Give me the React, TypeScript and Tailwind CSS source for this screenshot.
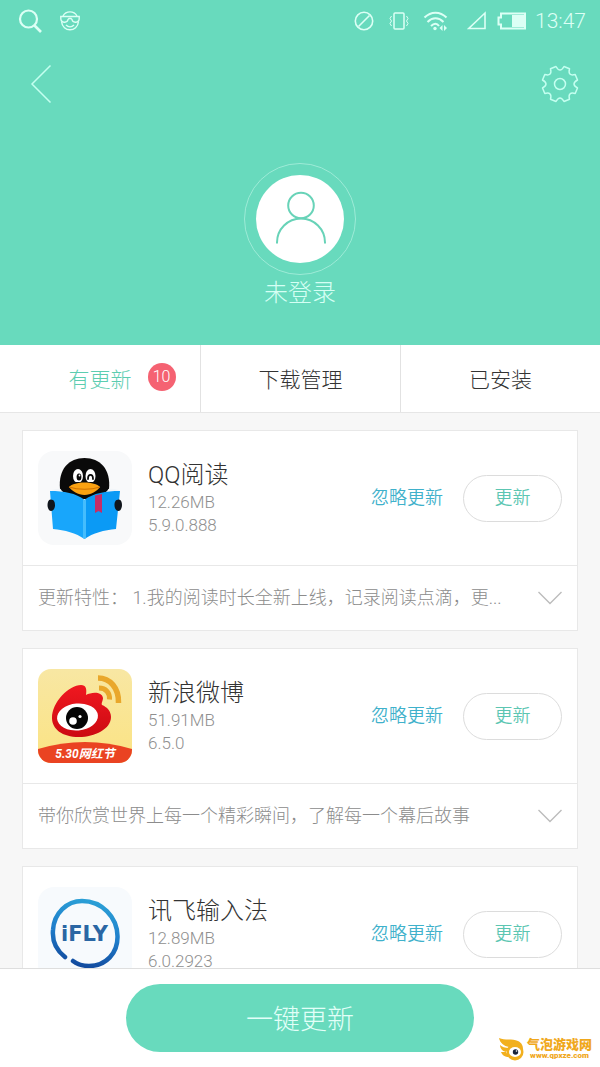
import type { ReactNode } from 'react';

type AppItem = {
  id: string;
  name: string;
  size: string;
  version: string;
  notes?: string;
  icon: ReactNode;
};

function ReaderIcon() {
  return (
    <svg viewBox="0 0 94 94" className="size-full" aria-hidden="true">
      <rect width="94" height="94" rx="16" fill="#f8f9fa" />
      <path d="M22 38C20 18 31 7 46.500 7S73 18 71 38c-5 7-16 11-24.500 11S27 45 22 38z" fill="#0a0a0a" />
      <ellipse cx="40" cy="25" rx="5" ry="7" fill="#fff" />
      <ellipse cx="52.500" cy="25" rx="5" ry="7" fill="#fff" />
      <ellipse cx="41" cy="26" rx="2.400" ry="3.600" fill="#0a0a0a" />
      <circle cx="41.500" cy="24.500" r="0.900" fill="#fff" />
      <path d="M50 28c0-5.500 5-5.500 5 0" fill="none" stroke="#0a0a0a" strokeWidth="1.800" strokeLinecap="round" />
      <path d="M14 39c11-3 25 0 32.500 8.500C54 39 69 36 81 39l-3 10H16z" fill="#f1f5f8" />
      <path d="M22 37c3 6 12 11 24.500 11S68 43 71 37l-3-6H25z" fill="#0a0a0a" />
      <path d="M31 36c5-6 26-6 31 0-3 4-9 8-15.500 8S34 40 31 36z" fill="#fba211" />
      <path d="M31 36c9 3 22 3 31 0" fill="none" stroke="#cf7203" strokeWidth="1.200" />
      <path d="M12 40c14 0 26 2 34.500 9v39C38 82 27 79 15 78z" fill="#18a6fb" />
      <path d="M82 40c-14 0-27 2-35.500 9v39C55 82 66 79 78 78z" fill="#0b9af5" />
      <path d="M45 48.200l1.500 1.300 1.500-1.300v38.800l-1.500 1-1.500-1z" fill="#45bdfd" />
      <path d="M57 44.500l7-1.500v19l-3.500-2-3.500 2z" fill="#c52d67" />
      <path d="M12.500 48.500c4 0 4.500 3 4.500 6s-2 5.500-4 5.500-3.500-3-3.500-6 1-5.500 3-5.500zM81 48.500c-4 0-4.500 3-4.500 6s2 5.500 4 5.500 3.500-3 3.500-6-1-5.500-3-5.500z" fill="#10151b" />
    </svg>
  );
}

function WeiboIcon() {
  return (
    <svg viewBox="0 0 94 94" className="size-full" aria-hidden="true">
      <defs>
        <clipPath id="weibo-clip">
          <rect width="94" height="94" rx="13" />
        </clipPath>
        <linearGradient id="weibo-bg" x1="0" y1="0" x2="0" y2="1">
          <stop offset="0" stopColor="#f8e7a3" />
          <stop offset="1" stopColor="#fbe383" />
        </linearGradient>
        <linearGradient id="weibo-red" x1="0" y1="0" x2="0" y2="1">
          <stop offset="0" stopColor="#f01820" />
          <stop offset="1" stopColor="#cc0a12" />
        </linearGradient>
      </defs>
      <g clipPath="url(#weibo-clip)">
        <rect width="94" height="94" fill="url(#weibo-bg)" />
        <path d="M60 9c12 0 21 10 20.500 25" fill="none" stroke="#e9a72b" strokeWidth="5.500" />
        <path d="M61 19c7 0 11 5 10.500 11.500" fill="none" stroke="#e9a72b" strokeWidth="5" />
        <path
          d="M14 49c0-16 17-33 29-33 5 0 6 4 5 10 5-3 16-4 17 3 0 3-2 5-1 7 5 2 9 6 9 12 0 12-16 20-32 20C24 68 14 60 14 49z"
          fill="url(#weibo-red)"
        />
        <ellipse cx="39.500" cy="48" rx="20.500" ry="13.500" fill="#fff" transform="rotate(-5 39.500 48)" />
        <circle cx="39" cy="49" r="11" fill="#050505" />
        <circle cx="35" cy="52" r="3.800" fill="#fff" />
        <circle cx="42" cy="47.500" r="1.600" fill="#fff" />
        <path d="M0 80q47-14 94 0v14H0z" fill="#ea4322" />
        <text
          x="47"
          y="89"
          textAnchor="middle"
          fill="#fff"
          fontSize="12"
          fontStyle="italic"
          fontWeight="700"
          fontFamily="Roboto, 'Noto Sans CJK SC', sans-serif"
        >
          5.30网红节
        </text>
      </g>
    </svg>
  );
}

function IflyIcon() {
  return (
    <svg viewBox="0 0 94 94" className="size-full" aria-hidden="true">
      <defs>
        <linearGradient id="ifly-ring" x1="0.6" y1="0" x2="0.4" y2="1">
          <stop offset="0" stopColor="#2b9fd6" />
          <stop offset="0.5" stopColor="#1f7ecb" />
          <stop offset="1" stopColor="#124a9e" />
        </linearGradient>
      </defs>
      <rect width="94" height="94" rx="16" fill="#f7fafd" />
      <path
        d="M27 70C18 63 14 54 15 43 16 26 29 14 44 14c20 0 35 16 35.500 35C80 66 68 79 51 79c-6 0-12-2-16-5"
        fill="none"
        stroke="url(#ifly-ring)"
        strokeWidth="4.500"
        strokeLinecap="round"
      />
      <text
        x="46.500"
        y="54"
        textAnchor="middle"
        fill="#2a66a4"
        fontSize="21"
        fontWeight="700"
        fontFamily="'DejaVu Sans', sans-serif"
      >
        iFLY
      </text>
    </svg>
  );
}

const APPS: AppItem[] = [
  {
    id: 'qq-reader',
    name: 'QQ阅读',
    size: '12.26MB',
    version: '5.9.0.888',
    notes: '更新特性： 1.我的阅读时长全新上线，记录阅读点滴，更...',
    icon: <ReaderIcon />,
  },
  {
    id: 'weibo',
    name: '新浪微博',
    size: '51.91MB',
    version: '6.5.0',
    notes: '带你欣赏世界上每一个精彩瞬间，了解每一个幕后故事',
    icon: <WeiboIcon />,
  },
  {
    id: 'ifly',
    name: '讯飞输入法',
    size: '12.89MB',
    version: '6.0.2923',
    icon: <IflyIcon />,
  },
];

const TABS = [
  { id: 'updates', label: '有更新', count: 10 },
  { id: 'downloads', label: '下载管理' },
  { id: 'installed', label: '已安装' },
];

function StatusBar() {
  return (
    <div className="flex h-[42px] items-center justify-between pr-3.5 pl-[18px] text-[#dcfff5]">
      <div className="flex items-center gap-4">
        <svg viewBox="0 0 26 26" className="size-[26px]" fill="none" stroke="currentColor" strokeWidth="2.200">
          <circle cx="10.500" cy="11" r="8.500" />
          <path d="M16.500 17.500l6.500 6.500" strokeWidth="2.600" />
        </svg>
        <svg viewBox="0 0 20 20" className="size-5" fill="none" stroke="currentColor" strokeWidth="1.400">
          <path d="M3 5C6-.5 14-.5 17 5M1.500 10.500c1 11 16 11 17 0M6 14c2.500 2.500 5.500 2.500 8 0" />
          <path d="M.8 5.500h18.400v2c0 4.500-6.500 5-7.200 1L11 7.500H9l-1 1C7.300 12.500.8 12 .8 7.500z" />
        </svg>
      </div>
      <div className="flex items-center">
        <svg viewBox="0 0 20 20" className="size-5" fill="none" stroke="currentColor" strokeWidth="1.600">
          <circle cx="10" cy="10" r="8.700" />
          <path d="M4.500 15.500l11-11" />
        </svg>
        <svg viewBox="0 0 20 20" className="ml-[15px] size-5" fill="none" stroke="currentColor" strokeWidth="1.500">
          <rect x="5" y="2" width="10" height="16" rx="1" />
          <path d="M2.500 5L1 7.500 2.500 10 1 12.500 2.500 15M17.500 5L19 7.500 17.500 10l1.500 2.500-1.500 2.500" strokeWidth="1" />
        </svg>
        <svg viewBox="0 0 26 20" className="ml-3.5 h-5 w-[26px]" fill="none" stroke="currentColor" strokeWidth="2">
          <path d="M1.500 6.500c6.500-6.500 15.500-6.500 22 0M4.500 11c5-5 11-5 16 0M8 15c3-3 6-3 8 0" />
          <circle cx="12" cy="17.500" r="1.700" fill="currentColor" stroke="none" />
          <path d="M19.500 14v6L16.500 17zM21 14v6l3-3z" fill="currentColor" stroke="none" />
        </svg>
        <svg viewBox="0 0 20 20" className="ml-[18px] size-5" fill="none" stroke="currentColor" strokeWidth="1.600">
          <path d="M18 2v15.500H1.800z" />
        </svg>
        <svg viewBox="0 0 30 20" className="ml-2.5 h-5 w-[30px]" fill="none" stroke="currentColor" strokeWidth="2">
          <path d="M4 2.500h24v15H4v-4H1.500v-7H4z" />
          <path d="M15 4h12v12H15z" fill="currentColor" stroke="none" />
        </svg>
        <span className="ml-2 text-[21px] leading-6 font-light">13:47</span>
      </div>
    </div>
  );
}

function ProfileHeader() {
  return (
    <header className="bg-[#68dabd] pb-[34px]">
      <StatusBar />
      <div className="flex h-[83px] items-center justify-between pr-5 pl-[23px] text-[#c4fff0]">
        <button type="button" aria-label="返回" className="flex h-12 w-9 items-center justify-center">
          <svg viewBox="0 0 24 40" className="h-10 w-6" fill="none" stroke="currentColor" strokeWidth="1.500">
            <path d="M21.500 1.500L3 20l18.500 18.500" />
          </svg>
        </button>
        <button type="button" aria-label="设置" className="flex size-10 items-center justify-center">
          <svg
            viewBox="-20 -20 40 40"
            className="size-10"
            fill="none"
            stroke="currentColor"
            strokeWidth="1.500"
            strokeLinejoin="round"
          >
            <circle r="5.500" />
            <path d="M-4-17.500Q0-10.500 4-17.500L9.500-15.200Q7.500-7.500 15.200-9.500L17.500-4Q10.500 0 17.500 4L15.200 9.500Q7.500 7.500 9.500 15.200L4 17.500Q0 10.500-4 17.500L-9.500 15.200Q-7.500 7.500-15.200 9.500L-17.500 4Q-10.500 0-17.500-4L-15.200-9.500Q-7.500-7.500-9.500-15.200Z" />
          </svg>
        </button>
      </div>
      <button type="button" className="mx-auto mt-[38px] flex flex-col items-center">
        <span className="flex size-28 items-center justify-center rounded-full border border-[#9debd7]">
          <span className="flex size-[88px] items-center justify-center rounded-full bg-white">
            <svg viewBox="0 0 56 56" className="size-14" fill="none" stroke="#68d3b8" strokeWidth="2">
              <circle cx="29" cy="14.500" r="12.800" />
              <path d="M5 52.500v-1a24 24 0 0 1 48 0v1" />
            </svg>
          </span>
        </span>
        <span className="text-2xl leading-9 font-light text-[#d5fff4]">未登录</span>
      </button>
    </header>
  );
}

function TabBar() {
  return (
    <nav className="grid grid-cols-3 border-b border-[#e6e6e6] bg-white">
      {TABS.map((tab) => (
        <button
          key={tab.id}
          type="button"
          className={
            tab.count
              ? 'flex h-[67px] items-center justify-center pt-1 text-[21px] font-light text-[#5ccdb0]'
              : 'flex h-[67px] items-center justify-center border-l border-[#e2e2e2] pt-1 text-[21px] font-light text-[#333]'
          }
        >
          <span className="relative">
            {tab.label}
            {tab.count ? (
              <span className="absolute -top-0.5 left-full ml-4 flex size-7 items-center justify-center rounded-full bg-[#f56272] text-base text-white">
                {tab.count}
              </span>
            ) : null}
          </span>
        </button>
      ))}
    </nav>
  );
}

function AppCard({ app }: { app: AppItem }) {
  return (
    <li className="shrink-0 border border-[#e8e8e8] bg-white">
      <div className="flex items-center px-[15px] py-5">
        <div className="size-[94px] shrink-0">{app.icon}</div>
        <div className="ml-4 min-w-0 flex-1 font-light">
          <h2 className="text-2xl leading-8 text-[#333]">{app.name}</h2>
          <p className="text-[17px] leading-[23px] text-[#8f8f8f]">{app.size}</p>
          <p className="text-[17px] leading-[23px] text-[#8f8f8f]">{app.version}</p>
        </div>
        <button type="button" className="text-lg font-[350] text-[#3fb1cb]">
          忽略更新
        </button>
        <button
          type="button"
          className="ml-5 flex h-[47px] w-[99px] items-center justify-center rounded-full border border-[#dcdcdc] text-lg font-[350] text-[#5cc6b2]"
        >
          更新
        </button>
      </div>
      {app.notes ? (
        <div className="flex h-[65px] items-center justify-between border-t border-[#e8e8e8] px-[15px]">
          <p className="truncate text-lg font-light text-[#8c8c8c]">{app.notes}</p>
          <button type="button" aria-label="展开" className="flex h-10 w-6 shrink-0 items-center">
            <svg viewBox="0 0 24 14" className="h-3.5 w-6" fill="none" stroke="#bcbcbc" strokeWidth="1.400">
              <path d="M.5 1L12 12.500 23.500 1" />
            </svg>
          </button>
        </div>
      ) : null}
    </li>
  );
}

function SiteMark() {
  return (
    <div className="absolute right-2 bottom-1.5 flex items-center gap-0.5 text-[#f0a81c]">
      <svg viewBox="0 0 28 24" className="h-6 w-7" aria-hidden="true">
        <path
          d="M2 1c6 3 13 0 19 3 4 2 5 5 5 8l-14-2C7 9 3 6 2 1zM3 8c2 2 5 3 9 3l-3 4C5 14 3 11 3 8zM4 15l5 0 3 5c-4 0-7-2-8-5z"
          fill="#f2b01e"
        />
        <circle cx="18" cy="15" r="8.500" fill="#f2b01e" />
        <ellipse cx="18" cy="15" rx="6" ry="5" fill="#fff" />
        <circle cx="18.500" cy="15" r="2.700" fill="#17233a" />
        <circle cx="19.500" cy="14" r="0.800" fill="#fff" />
      </svg>
      <div className="flex flex-col items-center font-black">
        <span className="text-[13px] leading-[14px]">气泡游戏网</span>
        <span className="text-[8px] leading-2">www.qpxze.com</span>
      </div>
    </div>
  );
}

export default function App() {
  return (
    <div className="flex h-screen flex-col overflow-hidden bg-[#f7f7f7] font-[Roboto,'Noto_Sans_CJK_SC',sans-serif]">
      <ProfileHeader />
      <TabBar />
      <main className="min-h-0 flex-1 overflow-hidden">
        <ul className="flex flex-col gap-[17px] px-[22px] pt-[17px]">
          {APPS.map((app) => (
            <AppCard key={app.id} app={app} />
          ))}
        </ul>
      </main>
      <footer className="relative flex justify-center border-t border-[#dedede] bg-white py-[15px]">
        <button
          type="button"
          className="h-[68px] w-[58%] rounded-full bg-[#68dabd] pt-1 text-[27px] font-light text-[#e2fff8]"
        >
          一键更新
        </button>
        <SiteMark />
      </footer>
    </div>
  );
}
